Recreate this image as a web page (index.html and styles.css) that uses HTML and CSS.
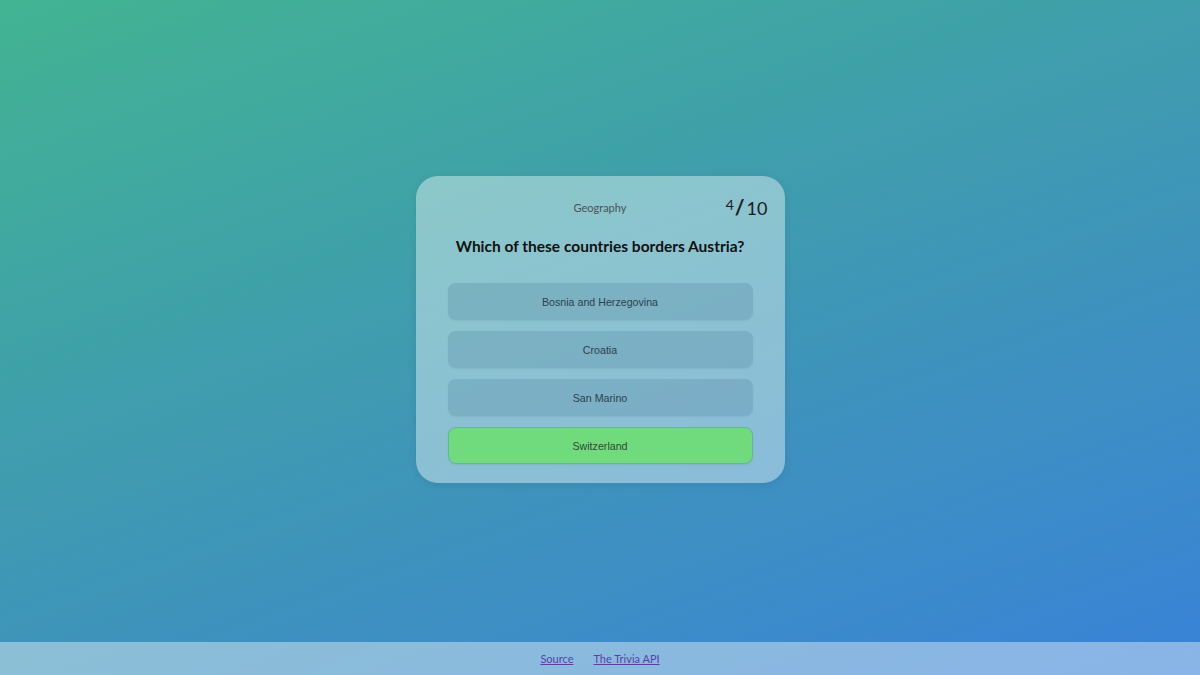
FILE: index.html
```html
<!DOCTYPE html>
<html lang="en">
<head>
<meta charset="utf-8">
<title>Trivia</title>
<link rel="stylesheet" href="styles.css">
</head>
<body>
<main class="stage">
  <section class="card">
    <header class="card-head">
      <span class="category">Geography</span>
      <span class="score"><sup class="score-now">4</sup><span class="score-slash">/</span><span class="score-total">10</span></span>
    </header>
    <h1 class="question">Which of these countries borders Austria?</h1>
    <div class="answers">
      <button class="answer">Bosnia and Herzegovina</button>
      <button class="answer">Croatia</button>
      <button class="answer">San Marino</button>
      <button class="answer answer-correct">Switzerland</button>
    </div>
  </section>
</main>
<footer class="footer">
  <a class="footer-link" href="#">Source</a>
  <a class="footer-link" href="#">The Trivia API</a>
</footer>
</body>
</html>
```
FILE: styles.css
```css
* { box-sizing: border-box; }
html, body { height: 100%; }
body {
  margin: 0;
  font-family: Lato, "Liberation Sans", sans-serif;
  background: linear-gradient(160deg, #42b492 0%, #3f9bb0 45%, #3a82d8 100%);
  display: flex;
  flex-direction: column;
  overflow: hidden;
}
.stage {
  flex: 1;
  display: flex;
  align-items: center;
  justify-content: center;
  padding-top: 17px;
}
.card {
  position: relative;
  width: 369px;
  padding: 22px 32px 19px;
  background: rgba(255, 255, 255, 0.4);
  border-radius: 22px;
  box-shadow: 0 2px 8px rgba(0, 0, 0, 0.08);
}
.card-head {
  height: 18px;
  display: flex;
  justify-content: center;
  align-items: center;
}
.category {
  font-size: 11px;
  color: #4a5257;
}
.score {
  position: absolute;
  top: 20px;
  right: 17px;
  color: #1c1c1c;
  line-height: 1;
}
.score-now {
  vertical-align: 5px;
  font-size: 14px;
}
.score-slash {
  font-size: 21px;
  font-weight: 700;
  margin: 0 2px 0 1px;
}
.score-total {
  font-size: 18px;
}
.question {
  margin: 21px 0 28px;
  font-size: 15.5px;
  font-weight: 700;
  color: #111;
  text-align: center;
}
.answers {
  display: flex;
  flex-direction: column;
  gap: 11px;
}
.answer {
  height: 37px;
  border: 0;
  border-radius: 8px;
  background: rgba(60, 110, 140, 0.2);
  box-shadow: 0 1px 2px rgba(0, 0, 0, 0.06);
  font-family: "Liberation Sans", Arial, sans-serif;
  font-size: 10.67px;
  color: #2e3f4d;
}
.answer-correct {
  background: #70db7c;
  border: 1px solid #5fb7a0;
  color: #2d4a36;
}
.footer {
  height: 33px;
  background: rgba(255, 255, 255, 0.4);
  display: flex;
  justify-content: center;
  align-items: center;
  gap: 20px;
}
.footer-link {
  font-size: 11px;
  color: #5a3fa8;
}
```
